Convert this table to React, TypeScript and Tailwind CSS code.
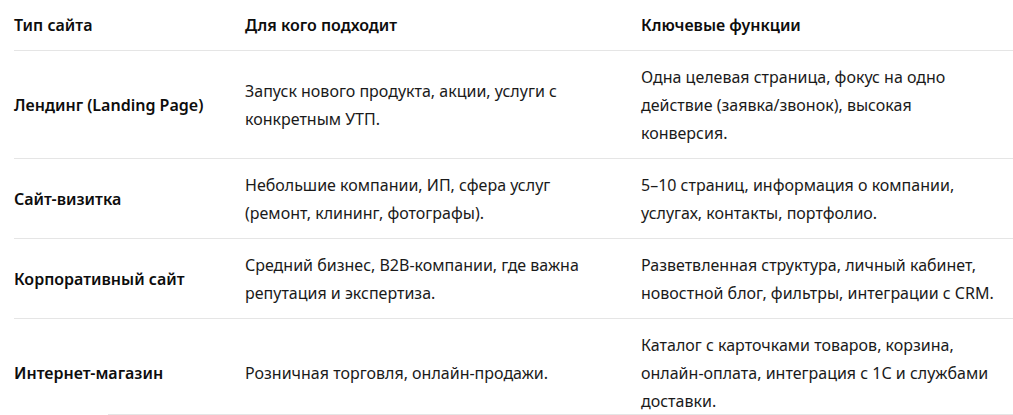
import React from "react";

const rows: [string, string, string][] = [
  [
    "Лендинг (Landing Page)",
    "Запуск нового продукта, акции, услуги с конкретным УТП.",
    "Одна целевая страница, фокус на одно действие (заявка/звонок), высокая конверсия.",
  ],
  [
    "Сайт-визитка",
    "Небольшие компании, ИП, сфера услуг (ремонт, клининг, фотографы).",
    "5–10 страниц, информация о компании, услугах, контакты, портфолио.",
  ],
  [
    "Корпоративный сайт",
    "Средний бизнес, B2B-компании, где важна репутация и экспертиза.",
    "Разветвленная структура, личный кабинет, новостной блог, фильтры, интеграции с CRM.",
  ],
  [
    "Интернет-магазин",
    "Розничная торговля, онлайн-продажи.",
    "Каталог с карточками товаров, корзина, онлайн-оплата, интеграция с 1С и службами доставки.",
  ],
];

export default function App() {
  return (
    <div
      className="relative h-[415px] w-[1013px] overflow-hidden bg-white text-[16px] leading-[28px] text-[#0d0d0d]"
      style={{ fontFamily: '"Segoe UI", "Noto Sans", sans-serif' }}
    >
      <table className="ml-[14px] w-[999px] table-fixed border-collapse">
        <colgroup>
          <col className="w-[231px]" />
          <col className="w-[396px]" />
          <col className="w-[372px]" />
        </colgroup>
        <thead>
          <tr className="border-b border-[#e5e5e5]">
            <th className="py-[11px] pr-4 text-left align-middle font-semibold">Тип сайта</th>
            <th className="py-[11px] pr-[40px] text-left align-middle font-semibold">Для кого подходит</th>
            <th className="py-[11px] pr-4 text-left align-middle font-semibold">Ключевые функции</th>
          </tr>
        </thead>
        <tbody>
          {rows.map((r, i) => (
            <tr key={i} className="border-b border-[#e5e5e5]">
              <td className="pt-3 pb-[11px] pr-4 align-middle font-semibold">{r[0]}</td>
              <td className="pt-3 pb-[11px] pr-[40px] align-middle text-[#1a1a1a]">{r[1]}</td>
              <td className="pt-3 pb-[11px] pr-4 align-middle text-[#1a1a1a]">{r[2]}</td>
            </tr>
          ))}
        </tbody>
      </table>
      <div className="absolute bottom-0 left-[108px] right-0 h-px bg-[#e5e5e5]" />
    </div>
  );
}
